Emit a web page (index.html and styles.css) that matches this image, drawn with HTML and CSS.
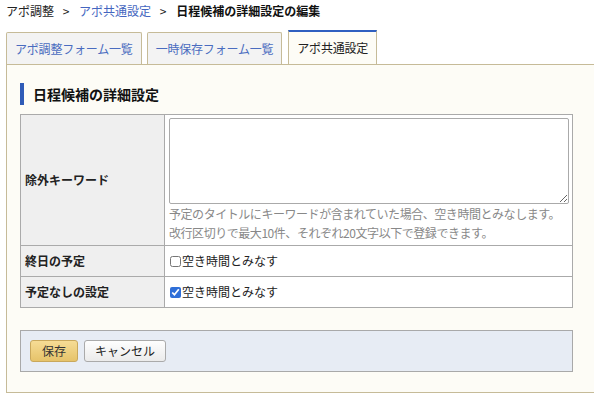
FILE: index.html
```html
<!DOCTYPE html>
<html lang="ja">
<head>
    <meta charset="UTF-8">
    <meta name="viewport" content="width=device-width, initial-scale=1.0">
    <title>日程候補の詳細設定の編集</title>
    <link rel="stylesheet" href="styles.css">
</head>
<body>
    <div class="breadcrumb">
        <span class="crumb">アポ調整</span>
        <span class="sep">&gt;</span>
        <a class="crumb-link" href="#">アポ共通設定</a>
        <span class="sep">&gt;</span>
        <span class="crumb-current">日程候補の詳細設定の編集</span>
    </div>

    <div class="tabs">
        <a class="tab" href="#">アポ調整フォーム一覧</a>
        <a class="tab" href="#">一時保存フォーム一覧</a>
        <span class="tab tab-active">アポ共通設定</span>
    </div>

    <div class="panel">
        <h2 class="section-title">日程候補の詳細設定</h2>

        <table class="settings">
            <tr>
                <th>除外キーワード</th>
                <td class="keyword-cell">
                    <textarea class="keyword-input"></textarea>
                    <div class="help">予定のタイトルにキーワードが含まれていた場合、空き時間とみなします。<br>改行区切りで最大10件、それぞれ20文字以下で登録できます。</div>
                </td>
            </tr>
            <tr>
                <th>終日の予定</th>
                <td><label class="check"><input type="checkbox">空き時間とみなす</label></td>
            </tr>
            <tr>
                <th>予定なしの設定</th>
                <td><label class="check"><input type="checkbox" checked>空き時間とみなす</label></td>
            </tr>
        </table>

        <div class="button-bar">
            <button class="btn btn-save">保存</button>
            <button class="btn btn-cancel">キャンセル</button>
        </div>
    </div>
</body>
</html>
```

FILE: styles.css
```css
body {
    margin: 0;
    font-family: "Noto Sans CJK JP", "Noto Sans", sans-serif;
    font-size: 12px;
    color: #222;
    background: #fff;
    overflow: hidden;
}

.breadcrumb {
    padding: 4px 6px;
    line-height: 14px;
    height: 14px;
}

.crumb {
    color: #222;
}

.crumb-link {
    color: #4466c0;
    text-decoration: none;
}

.crumb-current {
    font-weight: bold;
    color: #111;
}

.sep {
    margin: 0 7px 0 6px;
    color: #222;
}

.tabs {
    display: flex;
    align-items: flex-end;
    margin: 8px 0 0 6px;
    height: 34px;
}

.tab {
    display: block;
    height: 31px;
    line-height: 31px;
    padding: 0 8px;
    margin-right: 5px;
    background: #f3f3f3;
    border: 1px solid #c6bb98;
    border-bottom: none;
    border-radius: 2px 2px 0 0;
    color: #4a6cc0;
    text-decoration: none;
    letter-spacing: -0.2px;
}

.tab + .tab {
    margin-right: 6px;
}

.tab-active {
    height: 32px;
    line-height: 32px;
    background: #fdfcf6;
    border-top: 2px solid #2f5fc0;
    border-radius: 0;
    color: #222;
}

.panel {
    margin-left: 6px;
    padding: 18px 21px 20px 13px;
    background: #fdfcf6;
    border: 1px solid #c6bb98;
    border-right: none;
}

.section-title {
    margin: 0 0 9px 0;
    padding-left: 9px;
    border-left: 4px solid #2f5bb7;
    font-size: 14px;
    line-height: 22px;
    height: 22px;
    color: #111;
}

.settings {
    width: 100%;
    border-collapse: collapse;
    border: 1px solid #aaa;
    background: #fff;
}

.settings th {
    width: 135px;
    padding: 7px 4px;
    background: #efefef;
    border: 1px solid #aaa;
    text-align: left;
    font-weight: bold;
    line-height: 16px;
    vertical-align: middle;
}

.settings td {
    padding: 7px 3px 7px 4px;
    border: 1px solid #aaa;
    line-height: 16px;
    vertical-align: middle;
}

.settings td.keyword-cell {
    padding: 3px 3px 3px 4px;
}

.keyword-input {
    display: block;
    box-sizing: border-box;
    width: 100%;
    height: 86px;
    margin: 0;
    border: 1px solid #aaa;
    border-radius: 2px;
    font-family: inherit;
    font-size: 12px;
}

.help {
    color: #888;
    line-height: 19px;
    letter-spacing: -0.45px;
    white-space: nowrap;
}

.check {
    display: flex;
    align-items: center;
    color: #222;
}

.check input {
    width: 11px;
    height: 11px;
    margin: 0 1px 0 1px;
    accent-color: #2f6fd8;
}

.button-bar {
    margin-top: 22px;
    padding: 9px;
    background: #e7ecf4;
    border: 1px solid #a9a9a9;
    display: flex;
    gap: 6px;
}

.btn {
    height: 22px;
    padding: 0 10px;
    font-family: inherit;
    font-size: 12px;
    line-height: 20px;
    border-radius: 3px;
    cursor: pointer;
}

.btn-save {
    padding: 0 11px;
    color: #333;
    background: linear-gradient(#f6dc95, #e6c36a);
    border: 1px solid #c9a85c;
}

.btn-cancel {
    color: #222;
    background: linear-gradient(#fefefe, #ebebeb);
    border: 1px solid #aaa;
}
```
